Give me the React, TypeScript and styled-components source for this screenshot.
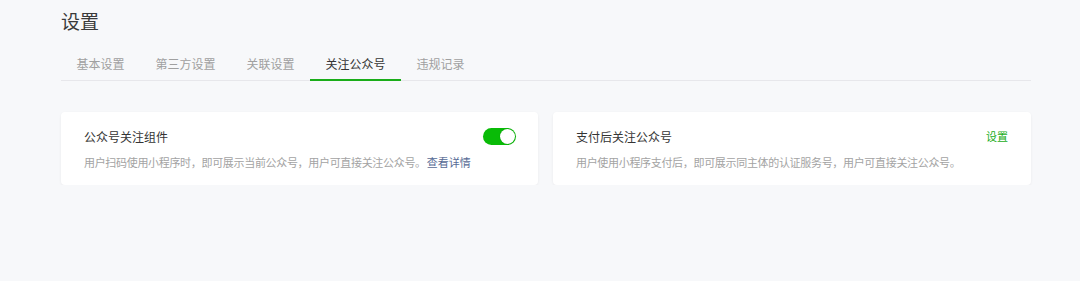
import React, { useState } from 'react';
import styled, { createGlobalStyle } from 'styled-components';

const GlobalStyle = createGlobalStyle`
  html, body {
    margin: 0;
    padding: 0;
    background: #f7f8fa;
    font-family: "Noto Sans CJK SC", "Liberation Sans", sans-serif;
  }
`;

const Page = styled.div`
  width: 970px;
  padding: 0 49px 0 61px;
`;

const PageTitle = styled.h1`
  margin: 0;
  padding-top: 8px;
  height: 41px;
  font-size: 19px;
  line-height: 26px;
  font-weight: 400;
  color: #3a3a3a;
`;

const Tabs = styled.div`
  display: flex;
  border-bottom: 1px solid #e7e7eb;
`;

const Tab = styled.div<{ $active?: boolean }>`
  padding: 0 15.5px;
  height: 30px;
  line-height: 30px;
  font-size: 12px;
  color: ${({ $active }) => ($active ? '#353535' : '#a0a0a0')};
  border-bottom: 2px solid ${({ $active }) => ($active ? '#1aad19' : 'transparent')};
  margin-bottom: -1px;
  cursor: pointer;
`;

const Cards = styled.div`
  display: grid;
  grid-template-columns: 477px 478px;
  gap: 15px;
  margin-top: 31px;
`;

const Card = styled.div`
  background: #fff;
  border-radius: 4px;
  box-shadow: 0 1px 3px rgba(0, 0, 0, 0.06);
  height: 73px;
  box-sizing: border-box;
  padding: 15px 22px 0 23px;
`;

const CardHead = styled.div`
  display: flex;
  align-items: center;
  justify-content: space-between;
  height: 18px;
`;

const CardTitle = styled.div`
  font-size: 12px;
  line-height: 18px;
  color: #353535;
  padding-top: 2px;
`;

const CardDesc = styled.div`
  margin-top: 10px;
  font-size: 11px;
  line-height: 14px;
  letter-spacing: -0.32px;
  color: #a3a3a3;
`;

const Link = styled.a<{ $tone: 'blue' | 'green' }>`
  color: ${({ $tone }) => ($tone === 'blue' ? '#576b95' : '#1aad19')};
  text-decoration: none;
  cursor: pointer;
  font-size: 11px;
  letter-spacing: 0;
  margin-left: ${({ $tone }) => ($tone === 'blue' ? '1px' : '0')};
  margin-right: ${({ $tone }) => ($tone === 'green' ? '1px' : '0')};
`;

const Switch = styled.button<{ $on: boolean }>`
  position: relative;
  width: 33px;
  height: 17px;
  padding: 0;
  border: none;
  border-radius: 9px;
  background: ${({ $on }) => ($on ? '#09bb07' : '#dcdcdc')};
  cursor: pointer;

  &::after {
    content: '';
    position: absolute;
    top: 1px;
    left: ${({ $on }) => ($on ? '17px' : '1px')};
    width: 15px;
    height: 15px;
    border-radius: 50%;
    background: #fff;
    box-shadow: 0 0 1px rgba(0, 0, 0, 0.3);
  }
`;

const tabs = ['基本设置', '第三方设置', '关联设置', '关注公众号', '违规记录'];

export default function App() {
  const [on, setOn] = useState(true);
  return (
    <Page>
      <GlobalStyle />
      <PageTitle>设置</PageTitle>
      <Tabs>
        {tabs.map((t) => (
          <Tab key={t} $active={t === '关注公众号'}>
            {t}
          </Tab>
        ))}
      </Tabs>
      <Cards>
        <Card>
          <CardHead>
            <CardTitle>公众号关注组件</CardTitle>
            <Switch $on={on} onClick={() => setOn(!on)} aria-label="公众号关注组件" />
          </CardHead>
          <CardDesc>
            用户扫码使用小程序时，即可展示当前公众号，用户可直接关注公众号。
            <Link $tone="blue">查看详情</Link>
          </CardDesc>
        </Card>
        <Card>
          <CardHead>
            <CardTitle>支付后关注公众号</CardTitle>
            <Link $tone="green">设置</Link>
          </CardHead>
          <CardDesc>用户使用小程序支付后，即可展示同主体的认证服务号，用户可直接关注公众号。</CardDesc>
        </Card>
      </Cards>
    </Page>
  );
}
